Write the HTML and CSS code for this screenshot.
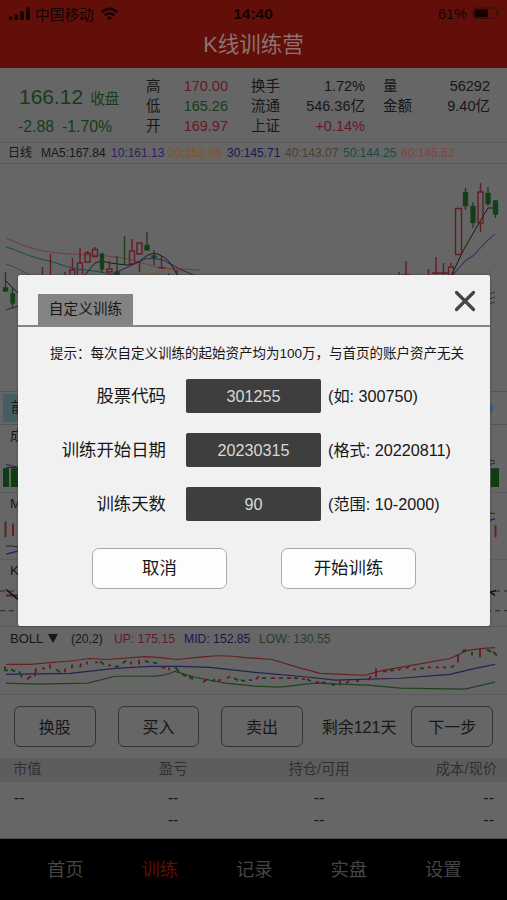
FILE: index.html
```html
<!DOCTYPE html>
<html lang="zh-CN">
<head>
<meta charset="utf-8">
<title>K线训练营</title>
<link rel="stylesheet" href="styles.css">
</head>
<body>
<div class="app">
  <header class="top">
    <div class="status">
      <div class="status-left">
        <svg class="signal" viewBox="0 0 22 14"><rect x="0" y="9.500" width="3.600" height="3.500" rx="1"/><rect x="5.500" y="7.500" width="3.600" height="5.500" rx="1"/><rect x="11" y="4.500" width="4" height="8.500" rx="1"/><rect x="17" y="0.500" width="4" height="12.500" rx="1"/></svg>
        <span class="carrier">中国移动</span>
        <svg class="wifi" viewBox="0 0 18 14"><path d="M1.200 5.300Q9 -1.700 16.800 5.300" fill="none" stroke="#160202" stroke-width="2.500"/><path d="M4.200 8.500Q9 4.200 13.800 8.500" fill="none" stroke="#160202" stroke-width="2.300"/><path d="M6.400 10.700Q9 8.500 11.600 10.700L9 13.300Z"/></svg>
      </div>
      <span class="clock">14:40</span>
      <div class="status-right">
        <span>61%</span>
        <svg class="battery" viewBox="0 0 28 13"><rect x="1" y="1" width="23.500" height="10.500" rx="3" fill="none" stroke="#3d0905"/><rect x="2.500" y="2.300" width="13.500" height="8" rx="1.500"/><path d="M26 4.500Q28 6.200 26 8Z" fill="#3d0905"/></svg>
      </div>
    </div>
    <h1 class="title">K线训练营</h1>
  </header>

  <section class="quote">
    <div class="price">
      <div class="price-main"><span class="last">166.12</span><span class="closed">收盘</span></div>
      <div class="change"><span>-2.88</span><span>-1.70%</span></div>
    </div>
    <dl class="stats s1"><dt>高</dt><dd class="up">170.00</dd><dt>低</dt><dd class="down">165.26</dd><dt>开</dt><dd class="up">169.97</dd></dl>
    <dl class="stats s2"><dt>换手</dt><dd>1.72%</dd><dt>流通</dt><dd>546.36亿</dd><dt>上证</dt><dd class="up">+0.14%</dd></dl>
    <dl class="stats s3"><dt>量</dt><dd>56292</dd><dt>金额</dt><dd>9.40亿</dd></dl>
  </section>

  <div class="ma"><span>日线</span><span>MA5:167.84</span><span class="m10">10:161.13</span><span class="m20">20:152.85</span><span class="m30">30:145.71</span><span class="m40">40:143.07</span><span class="m50">50:144.25</span><span class="m60">60:145.52</span></div>

  <section class="kline">
    <svg viewBox="0 164 507 227">
      <g fill="none" stroke-width="1">
        <path stroke="#733a39" d="M6 238C20 244 30 249 50 252S90 254 115 257S145 266 165 268L200 270"/>
        <path stroke="#174a46" d="M6 247C20 251 30 257 45 260S65 268 85 270S110 274 120 278"/>
        <path stroke="#4b4631" d="M6 264C16 267 24 272 32 276"/>
        <path stroke="#805522" d="M150 275L172 269L202 276M485 275L495 265M8 307L18 309"/>
        <path stroke="#30205f" d="M88 278L110 275L128 267L145 259Q153 257 163 260L180 269L202 279M6 310L18 306M451 277L466 260L473 256L486 242L495 234"/>
        <path stroke="#171b17" d="M84 276L95 263Q101 260 110 263L127 265Q136 265 145 257Q153 251 160 255Q170 259 177 275M6 281L18 293M450 278L464 249L475 230L488 208L495 208"/>
        <path stroke="#333" d="M489 294L495 292M489 299L495 297M489 304L495 302"/>
      </g>
      <g stroke="#651c24" stroke-width="1.400" fill="none">
        <path d="M42.500 267V278M50.500 254V278M65 272V278M72.500 258V270M80 248V263M87.500 251V254M95 247V250M109.500 261V268M132 239V251M139.500 261V272M161.500 256V268M158.500 268H165M169 273V278M399 272V278M406 261V278M428.500 269V278M436 257V278M443.500 263V278M451 263V266M480.500 183V192M480.500 223V232"/>
        <path d="M69.800 270h5v8h-5zM77.500 263h5v15h-5zM85 253h5v9h-5zM92.500 249.500h5v7h-5zM107 269h5v3h-5zM129.500 251h5v13h-5zM137 243h5v11h-5zM448.500 267h5v9h-5zM455.500 208.500h6v46h-6zM478 192h5v31h-5zM402 275h8M432 273h8M440 273h8"/>
      </g>
      <g stroke="#183f19" stroke-width="1.300" fill="#123f14">
        <path d="M124.500 236V265M147 232V250M154 250V265M117 256V278M102 253V273M177 270V278M465.500 188V210M473 202V228M488 187V206M495.500 200V218M5.500 272V292M12.500 288V307"/>
        <rect x="100.500" y="254" width="3" height="15"/><rect x="145" y="245.500" width="4" height="4.500"/><rect x="152" y="256" width="4" height="1"/><rect x="115" y="272" width="4" height="3"/><rect x="463.500" y="192.500" width="4" height="13"/><rect x="471" y="206.500" width="4" height="16"/><rect x="486" y="193.500" width="4" height="10"/><rect x="493.500" y="201" width="4" height="13"/><rect x="3.500" y="288" width="4" height="3"/><rect x="11" y="294" width="3.500" height="9"/>
      </g>
    </svg>
  </section>

  <section class="tools"><span class="adjust">前复权</span><span class="knob"></span></section>

  <section class="panel volume"><h2>成交量</h2>
    <svg viewBox="0 425 507 68" preserveAspectRatio="none"><g fill="#103c12"><path d="M3 469h6v19H3zM11 469h7v19h-7zM491 469h8v19h-8z"/></g><path d="M6 465L18 468M489 465L495 464" fill="none" stroke="#291d60"/><path d="M6 468H18M489 460L495 462" fill="none" stroke="#222"/></svg>
  </section>
  <section class="panel macd"><h2>MACD</h2>
    <svg viewBox="0 493 507 67" preserveAspectRatio="none"><path d="M5.500 522V538M13 524V537M495.500 526V538" fill="none" stroke="#65201f" stroke-width="2"/><path d="M6 547Q12 546 18 548M489 513L495 514" fill="none" stroke="#222"/><path d="M6 555L18 552M489 521L495 519" fill="none" stroke="#20206a" stroke-width="1.300"/></svg>
  </section>
  <section class="panel kdj"><h2>KDJ</h2>
    <svg viewBox="0 560 507 67" preserveAspectRatio="none"><path d="M0 591.500H507M0 611.500H507" stroke="#272727" stroke-dasharray="5 4"/><path d="M6 596H18" stroke="#651c24" stroke-width="2"/><path d="M6 590L18 600M489 593L496 591M489 592L495 596" fill="none" stroke="#111" stroke-width="1.500"/></svg>
  </section>
  <section class="panel boll">
    <div class="boll-head"><span class="boll-name">BOLL</span><i class="caret"></i><span class="boll-param">(20,2)</span><span class="b-up">UP: 175.15</span><span class="b-mid">MID: 152.85</span><span class="b-low">LOW: 130.55</span></div>
    <svg viewBox="0 627 507 68" preserveAspectRatio="none"><g fill="none" stroke-width="1.200">
      <path stroke="#681f20" d="M6 665H30L75 661L90 659L107 660L145 657L160 658L177 660L205 657Q225 655 245 658L272 660L298 668L320 674L365 676L383 671L400 668L450 659L467 651L480 649L495 648"/>
      <path stroke="#23234f" d="M6 675L70 674L115 669L150 667L180 667L210 668L255 673L310 678L335 681L400 679L450 675L475 669L495 665"/>
      <path stroke="#20421f" d="M6 684L35 685L88 684L115 677H150Q166 677 175 672L195 678L225 684L255 687L280 688L315 684L368 686L400 689L465 690L495 683"/>
      <path stroke="#173f19" stroke-width="1.800" d="M5 667V671H8M11 670L15 672M19 672L22 678M56 670L60 673M100 662L104 665M115 667H119M123 664L126 661M145 661L149 663M153 663L157 664M175 667L179 673M182 675L186 677M189 678L193 680M212 682L215 680M234 679L238 681M241 681L245 682M262 679H266M279 679H283M294 679H298M307 680L311 682M322 683L326 684M331 685L335 686M390 671H394M420 669H424M462 652L466 650M472 652V656M487 650L491 652M493 652L497 656"/>
      <path stroke="#651923" stroke-width="1.800" d="M27 680L31 677M35 677L36 669M42 669H45M50 669V665M65 673V669M72 669V665M80 668L81 664M87 665V662M95 663H98M108 666H111M131 665V662M139 665V660M161 667L165 669M169 671V668M189 677L193 678M203 683L207 680M218 681H221M227 679L230 677M249 681H252M256 680L259 677M271 679H275M287 679H291M302 680H305M316 683H319M340 686V681M346 684L349 682M356 682H359M368 681L371 677M376 678V669M383 672H387M398 671L401 669M406 669L409 667M413 670H416M428 668H431M436 668H439M443 668H446M451 668L454 666M458 663V655M480 658V649"/>
    </g></svg>
  </section>

  <section class="actions"><button>换股</button><button>买入</button><button>卖出</button><span>剩余121天</span><button>下一步</button></section>

  <section class="holdings">
    <div class="row head"><span>市值</span><span>盈亏</span><span>持仓/可用</span><span>成本/现价</span></div>
    <div class="row"><span>--</span><span>--</span><span>--</span><span>--</span></div>
    <div class="row"><span></span><span>--</span><span>--</span><span>--</span></div>
  </section>

  <nav class="nav"><a>首页</a><a class="active">训练</a><a>记录</a><a>实盘</a><a>设置</a></nav>

  <div class="modal" role="dialog">
    <div class="modal-head"><span class="tab">自定义训练</span><svg class="close" viewBox="0 0 22 22"><path d="M2.500 2.500L19.500 19.500M19.500 2.500L2.500 19.500"/></svg></div>
    <p class="tip">提示：每次自定义训练的起始资产均为100万，与首页的账户资产无关</p>
    <div class="form">
      <label>股票代码</label><div class="field">301255</div><span>(如: 300750)</span>
      <label>训练开始日期</label><div class="field">20230315</div><span>(格式: 20220811)</span>
      <label>训练天数</label><div class="field">90</div><span>(范围: 10-2000)</span>
    </div>
    <div class="modal-actions"><button>取消</button><button>开始训练</button></div>
  </div>
</div>
</body>
</html>
```
FILE: styles.css
```css
* { box-sizing: border-box; }
body { margin: 0; font-family: "Liberation Sans", "Noto Sans CJK SC", sans-serif; color: #171717; background: #666; }
h1, h2, p, dl, dd { margin: 0; font-weight: 400; }
svg { display: block; }
button { font-family: inherit; color: inherit; padding: 0; }
.app { position: relative; width: 507px; height: 900px; overflow: hidden; display: flex; flex-direction: column; white-space: nowrap; }
.app > * { flex: none; }

.top { height: 68px; background: #620f09; }
.status { height: 27px; display: grid; grid-template-columns: 1fr auto 1fr; align-items: center; padding: 0 7px 0 9px; color: #160202; }
.status svg { fill: #160202; }
.status-left, .status-right { display: flex; align-items: center; }
.status-right { justify-content: flex-end; gap: 5px; font-size: 14.500px; }
.signal { width: 22px; height: 14px; }
.carrier { font-size: 14.700px; margin: 0 6px 0 4px; }
.wifi { width: 19px; height: 14px; }
.clock { font-size: 15.500px; font-weight: 700; margin: 0 3px 0 0; }
.battery { width: 28px; height: 13px; }
.title { height: 36px; line-height: 36px; text-align: center; font-size: 21.500px; color: #8c7370; }

.quote { height: 75px; display: flex; border-bottom: 1px solid #5a5a5a; padding-top: 8px; }
.price { width: 146px; color: #173c19; }
.price-main { display: flex; align-items: center; height: 42px; padding-left: 19px; gap: 7px; }
.last { font-size: 21px; }
.closed { font-size: 14.500px; }
.change { display: flex; gap: 8px; padding-left: 18px; font-size: 15.800px; line-height: 18px; }
.stats { display: grid; grid-template-columns: auto 1fr; grid-auto-rows: 20px; line-height: 20px; font-size: 14.500px; }
.stats dd { text-align: right; }
.s1 { width: 82px; }
.s2 { width: 114px; margin-left: 23px; }
.s3 { width: 107px; margin-left: 18px; }
.up { color: #651925; }
.down { color: #173c19; }

.ma { height: 21px; display: grid; grid-template-columns: 33px 70px 57px 59px 58px 58px 58px 58px; padding-left: 8px; border-bottom: 1px solid #5a5a5a; font-size: 12px; line-height: 20px; }
.m10 { color: #30205f; }
.m20 { color: #805522; }
.m30 { color: #17174d; }
.m40 { color: #4b3f31; }
.m50 { color: #174a46; }
.m60 { color: #814541; }

.kline { height: 227px; }
.kline svg { width: 507px; height: 227px; }
.tools { height: 34px; border-top: 1px solid #555; border-bottom: 1px solid #555; display: flex; align-items: center; justify-content: space-between; padding: 0 14px 0 3px; }
.adjust { width: 70px; height: 28px; line-height: 26px; padding-left: 8px; background: #465d68; font-size: 14px; }
.knob { width: 15px; height: 15px; border-radius: 50%; background: #365a80; }
.panel { display: grid; border-bottom: 1px solid #5a5a5a; }
.panel > * { grid-area: 1 / 1; }
.panel svg { width: 507px; height: 100%; }
.panel h2 { font-size: 13.500px; line-height: 22px; padding-left: 10px; }
.volume { height: 68px; }
.macd { height: 67px; }
.kdj { height: 67px; }
.boll { height: 68px; }
.boll-head { display: flex; align-items: center; height: 23px; padding-left: 10px; font-size: 12.200px; }
.boll-name { font-size: 13px; width: 38px; }
.caret { width: 0; height: 0; border: 5px solid transparent; border-top: 9px solid #171717; border-bottom: 0; }
.boll-param { margin-left: 13px; width: 43px; }
.b-up { color: #651925; width: 70px; }
.b-mid { color: #17174d; width: 75px; }
.b-low { color: #253d26; }

.actions { height: 63px; display: flex; align-items: center; padding: 0 14px 1px; font-size: 16px; }
.actions button { width: 82px; height: 41px; border: 1.500px solid #333; border-radius: 6px; background: none; font-size: 16px; margin-right: 21.900px; }
.actions span { width: 90px; margin-left: -3px; }
.actions button:last-child { margin: 0; }

.holdings { height: 81px; border-bottom: 1px solid #4d4d4d; }
.row { display: grid; grid-template-columns: 86px 146px 146px 1fr; height: 22px; align-items: center; text-align: center; padding: 0 13px 0 14px; font-size: 16px; }
.row > :first-child { text-align: left; }
.row > :last-child { text-align: right; }
.row.head { grid-template-columns: 87px 146px 146px 1fr; height: 24px; line-height: 22px; align-items: start; background: #5d5d5d; color: #303030; font-size: 14.300px; padding: 0 10px 0 13px; margin-bottom: 5px; }

.nav { height: 61px; background: #000; display: grid; grid-template-columns: repeat(5, 94.500px); padding-left: 18px; color: #454545; font-size: 18.300px; line-height: 61px; text-align: center; }
.nav .active { color: #620b07; }

.modal { position: absolute; left: 18px; top: 275px; width: 472px; height: 351px; background: #f1f1f1; border-radius: 2px; box-shadow: 0 0 2px #333; }
.modal-head { height: 52px; border-bottom: 2px solid #858585; display: flex; align-items: flex-end; justify-content: space-between; padding: 0 14px 0 20px; }
.tab { width: 95px; height: 31px; line-height: 31px; background: #838383; text-align: center; font-size: 14.700px; }
.close { width: 22px; height: 22px; margin-bottom: 13px; fill: none; stroke: #444; stroke-width: 3.200; stroke-linecap: round; }
.tip { height: 52px; line-height: 54px; padding-left: 32px; font-size: 13.500px; }
.form { display: grid; grid-template-columns: 148px 135px auto; grid-auto-rows: 34px; row-gap: 20px; line-height: 35px; font-size: 16.200px; }
.form label { text-align: right; font-size: 17.400px; }
.form .field { margin-left: 20px; width: 135px; background: #3e3e3e; color: #d8d8d8; border-radius: 2px; text-align: center; }
.form span { margin-left: 27px; }
.modal-actions { display: flex; gap: 54px; padding: 27px 0 0 74px; }
.modal-actions button { width: 135px; height: 41px; border: 1.500px solid #aaa; border-radius: 7px; background: #fdfdfd; font-size: 17.400px; line-height: 36px; padding-bottom: 2px; }
```
